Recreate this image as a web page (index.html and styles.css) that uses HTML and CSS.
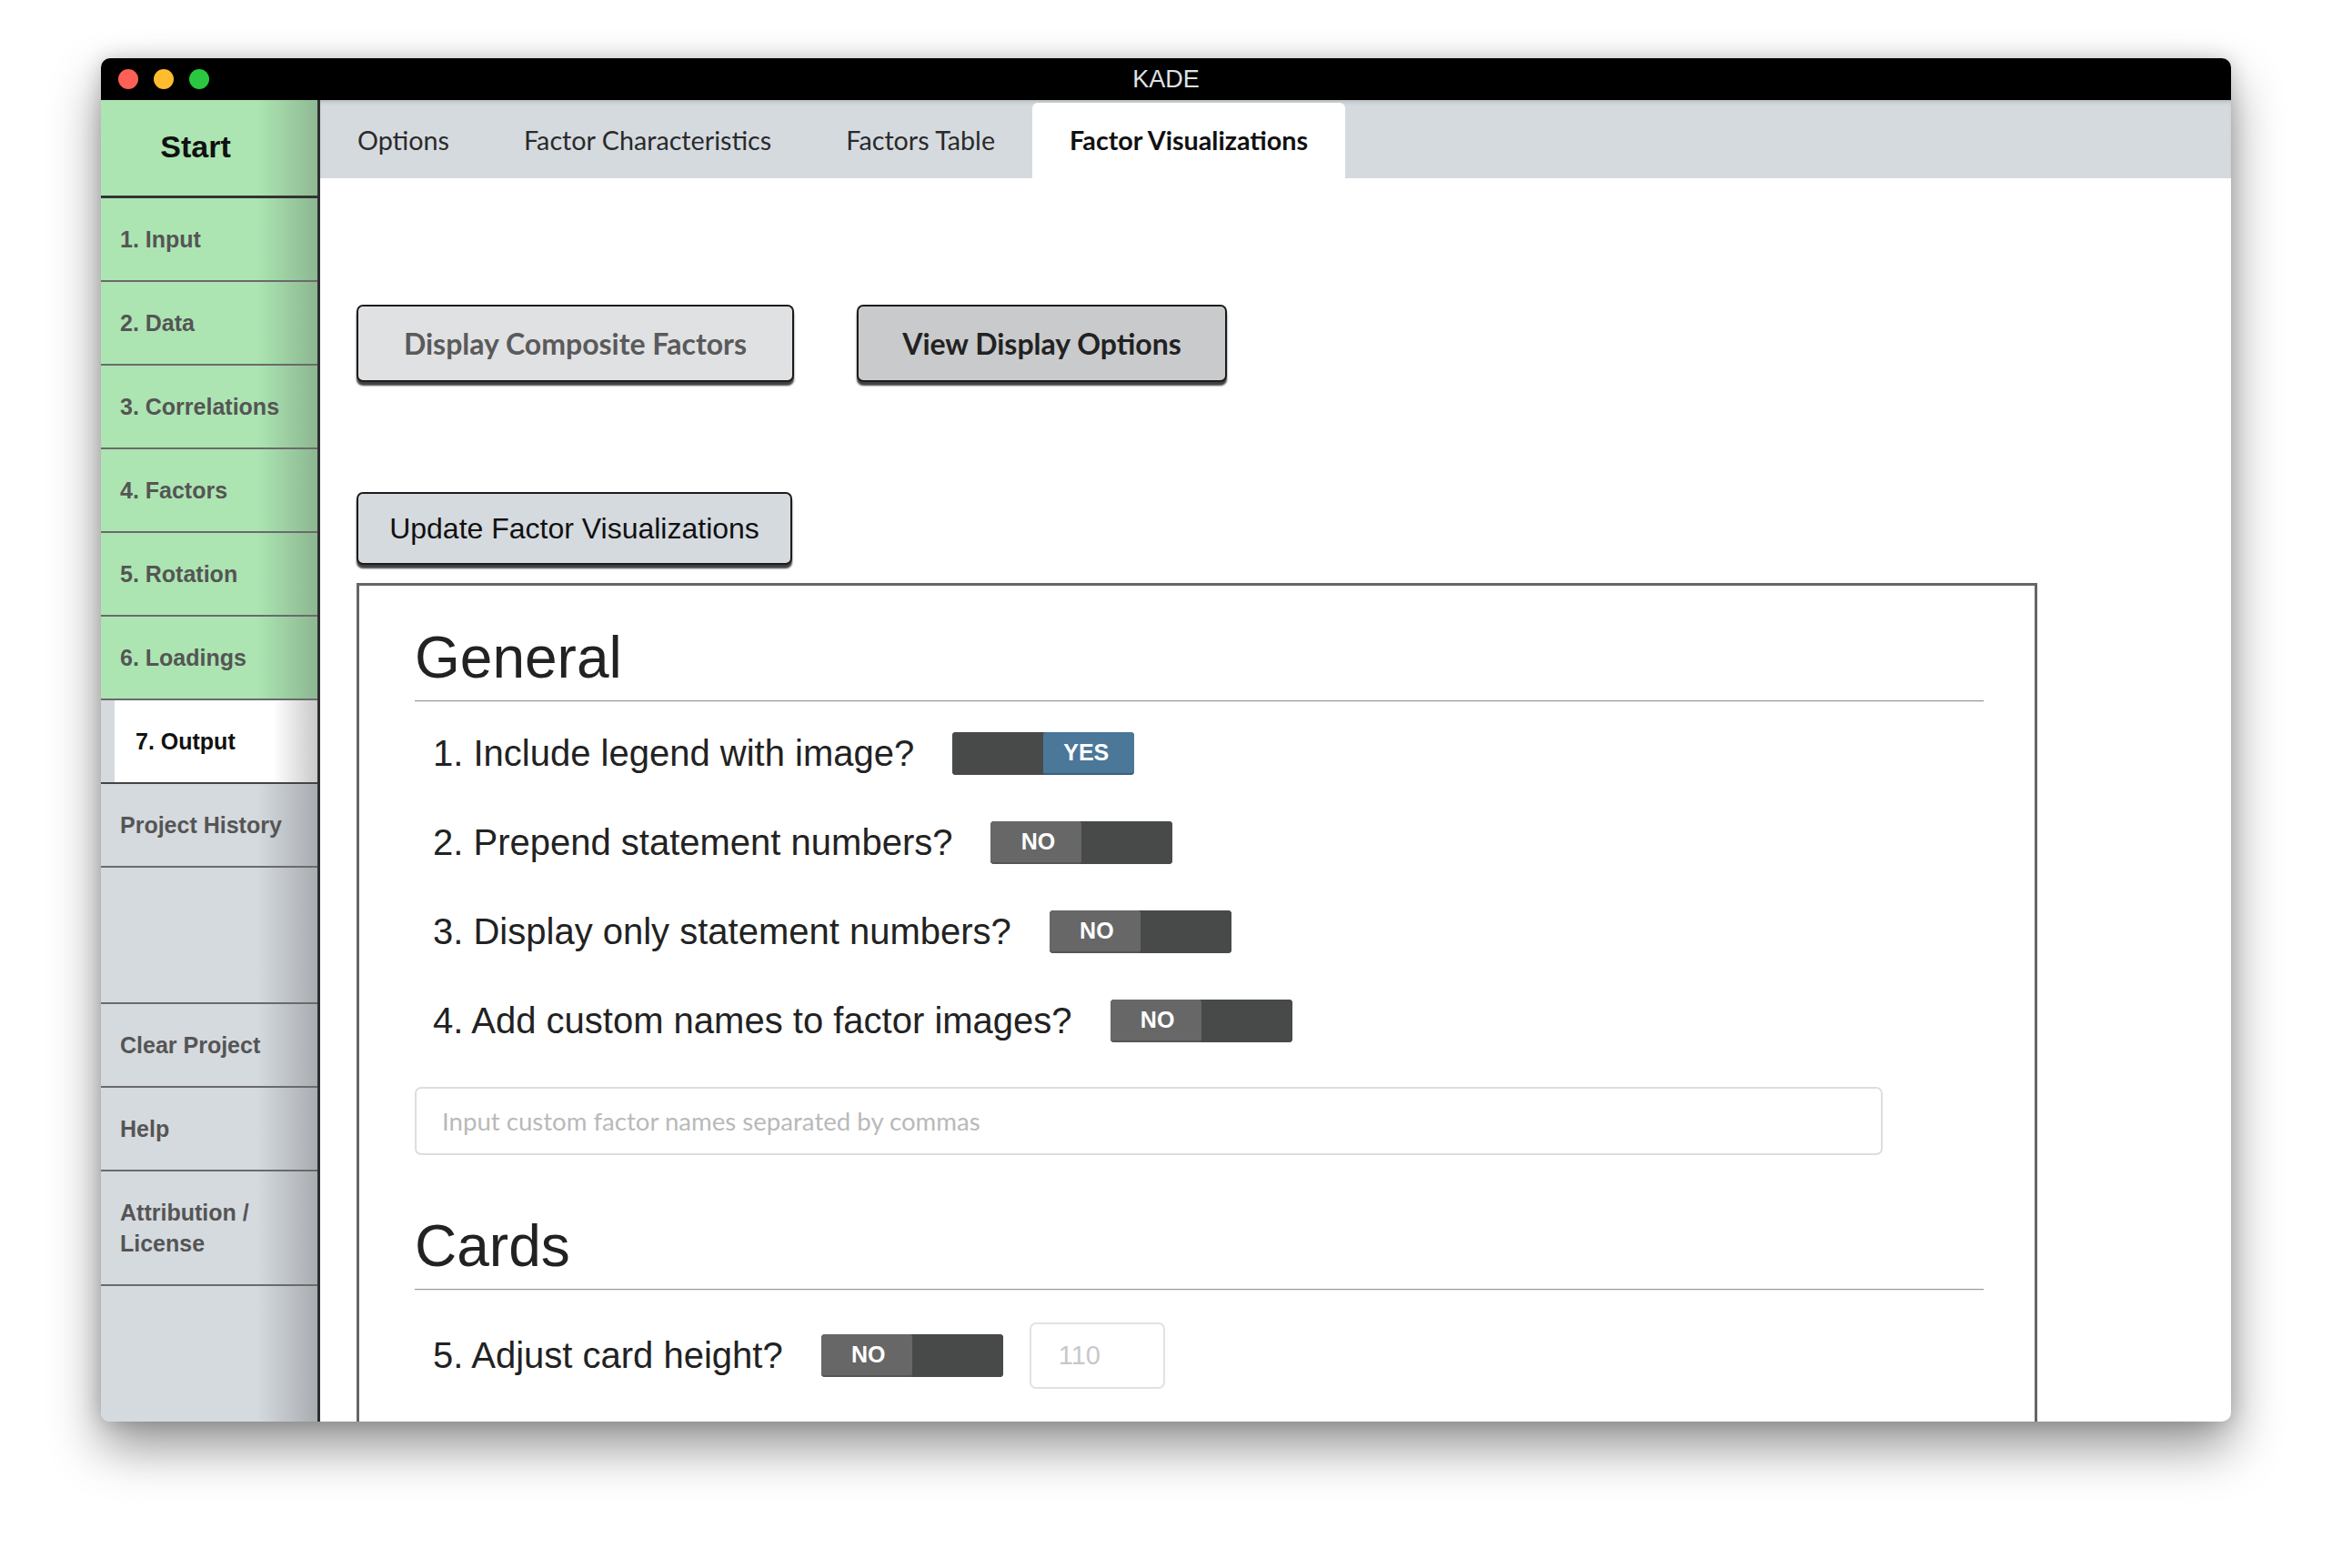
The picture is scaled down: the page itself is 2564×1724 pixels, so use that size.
FILE: index.html
```html
<!DOCTYPE html>
<html lang="en">
<head>
<meta charset="utf-8">
<title>KADE</title>
<link rel="stylesheet" href="styles.css">
</head>
<body>
<div class="stage">
  <div class="window">
    <div class="titlebar">
      <div class="lights">
        <span class="light red"></span>
        <span class="light yellow"></span>
        <span class="light green"></span>
      </div>
      <span class="title">KADE</span>
    </div>
    <div class="app">
      <nav class="sidebar">
        <div class="start">Start</div>
        <div class="nav-item step">1. Input</div>
        <div class="nav-item step">2. Data</div>
        <div class="nav-item step">3. Correlations</div>
        <div class="nav-item step">4. Factors</div>
        <div class="nav-item step">5. Rotation</div>
        <div class="nav-item step">6. Loadings</div>
        <div class="nav-item active"><span class="active-label">7. Output</span></div>
        <div class="nav-item util">Project History</div>
        <div class="nav-spacer"></div>
        <div class="nav-item util">Clear Project</div>
        <div class="nav-item util">Help</div>
        <div class="nav-item util tall">Attribution /<br>License</div>
        <div class="nav-fill"></div>
      </nav>
      <main class="main">
        <div class="tabbar">
          <div class="tab">Options</div>
          <div class="tab">Factor Characteristics</div>
          <div class="tab">Factors Table</div>
          <div class="tab tab-active">Factor Visualizations</div>
        </div>
        <div class="content">
          <div class="btn-row">
            <button class="btn btn-composite">Display Composite Factors</button>
            <button class="btn btn-view">View Display Options</button>
          </div>
          <button class="btn btn-update">Update Factor Visualizations</button>
          <section class="panel">
            <h2 class="section-title">General</h2>
            <hr class="rule">
            <div class="q-row first">
              <span class="q-text">1. Include legend with image?</span>
              <span class="toggle on"><span class="half off-half"></span><span class="half yes">YES</span></span>
            </div>
            <div class="q-row">
              <span class="q-text">2. Prepend statement numbers?</span>
              <span class="toggle"><span class="half no">NO</span><span class="half off-half"></span></span>
            </div>
            <div class="q-row">
              <span class="q-text">3. Display only statement numbers?</span>
              <span class="toggle"><span class="half no">NO</span><span class="half off-half"></span></span>
            </div>
            <div class="q-row">
              <span class="q-text">4. Add custom names to factor images?</span>
              <span class="toggle"><span class="half no">NO</span><span class="half off-half"></span></span>
            </div>
            <input class="names-input" type="text" placeholder="Input custom factor names separated by commas">
            <h2 class="section-title cards">Cards</h2>
            <hr class="rule">
            <div class="q-row card-row">
              <span class="q-text">5. Adjust card height?</span>
              <span class="toggle"><span class="half no">NO</span><span class="half off-half"></span></span>
              <input class="num-input" type="text" placeholder="110">
            </div>
          </section>
        </div>
      </main>
    </div>
  </div>
</div>
</body>
</html>
```

FILE: styles.css
```css
* { box-sizing: border-box; }
html, body { margin: 0; padding: 0; background: #ffffff; }
body { width: 2564px; height: 1724px; overflow: hidden; font-family: "Liberation Sans", Arial, sans-serif; }

.stage { padding: 64px 0 0 111px; }

.window {
  width: 2342px;
  height: 1499px;
  border-radius: 10px;
  overflow: hidden;
  display: flex;
  flex-direction: column;
  background: #fff;
  box-shadow: 0 28px 55px rgba(0,0,0,0.42), 0 0 22px rgba(0,0,0,0.18);
}

.titlebar {
  height: 46px;
  flex: none;
  background: #000;
  position: relative;
  display: flex;
  align-items: center;
  justify-content: center;
}
.lights { position: absolute; left: 19px; top: 12px; display: flex; gap: 17px; }
.light { width: 22px; height: 22px; border-radius: 50%; display: block; }
.red { background: #fe5f57; }
.yellow { background: #febc2e; }
.green { background: #2ac840; }
.title { color: #dfe2e5; font-size: 27px; font-family: "Liberation Sans", Arial, sans-serif; }

.app { flex: 1; display: flex; min-height: 0; }

/* Sidebar */
.sidebar {
  width: 241px;
  flex: none;
  display: flex;
  flex-direction: column;
  border-right: 3px solid #2e2e30;
  background: #d5dadf;
  font-family: "Liberation Sans", Arial, sans-serif;
  font-weight: bold;
}
.start {
  height: 108px;
  flex: none;
  display: flex;
  align-items: center;
  justify-content: center;
  padding-right: 30px;
  padding-bottom: 2px;
  font-size: 34px;
  color: #111;
  background: linear-gradient(to right, #ace5b2 0%, #ace5b2 72%, #8fb994 100%);
  border-bottom: 3px solid #333;
}
.nav-item {
  height: 92px;
  flex: none;
  display: flex;
  align-items: center;
  padding-left: 21px;
  font-size: 25px;
  color: #555;
  border-bottom: 2px solid #6a6a6c;
}
.step { background: linear-gradient(to right, #ace5b2 0%, #ace5b2 72%, #8cb791 100%); }
.util { background: linear-gradient(to right, #d5dadf 0%, #d5dadf 72%, #a9adb1 100%); }
.tall { height: 126px; line-height: 34px; }
.active {
  padding-left: 15px;
  background: #d5dadf;
  border-bottom: 2px solid #444;
}
.active-label {
  flex: 1;
  align-self: stretch;
  display: flex;
  align-items: center;
  padding-left: 23px;
  color: #111;
  background: linear-gradient(to right, #fff 0%, #fff 78%, #c9c9c9 100%);
}
.nav-spacer {
  height: 150px;
  flex: none;
  border-bottom: 2px solid #6a6a6c;
  background: linear-gradient(to right, #d5dadf 0%, #d5dadf 72%, #a9adb1 100%);
}
.nav-fill { flex: 1; background: linear-gradient(to right, #d5dadf 0%, #d5dadf 72%, #a9adb1 100%); }

/* Main */
.main { flex: 1; display: flex; flex-direction: column; min-width: 0; }
.tabbar {
  height: 86px;
  flex: none;
  display: flex;
  align-items: flex-end;
  background: #d5dadf;
  box-shadow: inset 0 4px 4px -2px rgba(0,0,0,0.15);
}
.tab {
  height: 83px;
  display: flex;
  align-items: center;
  padding: 0 41px 2px;
  font-family: Lato, "Open Sans", sans-serif;
  font-size: 28.7px;
  color: #2a2a2a;
}
.tab-active {
  background: #fff;
  border-radius: 6px 6px 0 0;
  font-weight: bold;
  color: #111;
}

.content { flex: 1; padding: 139px 0 0 40px; min-height: 0; }
.btn-row { display: flex; gap: 69px; }
.btn {
  display: block;
  border: 2px solid #1c1c1c;
  border-radius: 7px;
  box-shadow: 0 4px 2px rgba(0,0,0,0.75);
  cursor: pointer;
  padding: 0;
}
.btn-composite {
  width: 481px; height: 85px;
  background: #e0e1e3;
  color: #5a5a5a;
  font-family: Lato, sans-serif; font-weight: bold; font-size: 32px;
}
.btn-view {
  width: 407px; height: 85px;
  background: #c9cacc;
  color: #222;
  font-family: Lato, sans-serif; font-weight: bold; font-size: 32px;
}
.btn-update {
  margin-top: 121px;
  width: 479px; height: 80px;
  background: #d5dadf;
  color: #111;
  font-family: "Liberation Sans", Arial, sans-serif; font-size: 32px;
}

.panel {
  margin-top: 20px;
  width: 1848px;
  height: 1000px;
  border: 3px solid #666;
  padding: 42px 56px 0 61px;
  color: #222;
}
.section-title {
  margin: 0;
  font-weight: normal;
  font-size: 64px;
  line-height: 74px;
  color: #222;
  font-family: "Liberation Sans", Arial, sans-serif;
}
.section-title.cards { margin-top: 63px; }
.rule {
  margin: 10px 0 0 0;
  border: none;
  height: 2px;
  background: #9a9a9a;
  border-bottom: 1px solid #e6e6e6;
}
.q-row {
  height: 98px;
  display: flex;
  align-items: center;
  padding-left: 20px;
  gap: 42px;
}
.q-row.first { margin-top: 7px; }
.q-text { font-size: 40px; color: #222; }
.toggle {
  width: 200px;
  height: 47px;
  display: flex;
  border-radius: 4px;
  overflow: hidden;
  background: #484a49;
  flex: none;
}
.half {
  width: 100px;
  height: 100%;
  display: flex;
  align-items: center;
  justify-content: center;
  color: #fff;
  font-weight: bold;
  font-size: 25px;
}
.off-half { background: #484a49; }
.yes { background: #4b7799; border-bottom: 2px solid #39607f; border-radius: 3px; padding-right: 6px; }
.no { background: #676767; border-bottom: 2px solid #555; border-radius: 3px; padding-left: 4px; }

.names-input {
  display: block;
  margin-top: 24px;
  width: 1614px;
  height: 75px;
  border: 2px solid #dedede;
  border-radius: 7px;
  padding: 0 0 0 28px;
  font-family: Lato, sans-serif;
  font-size: 27.6px;
  color: #333;
  outline: none;
}
.names-input::placeholder { color: #b9b9b9; }

.card-row { margin-top: 22px; gap: 0; }
.card-row .toggle { margin-left: 42px; }
.num-input {
  margin-left: 29px;
  width: 149px;
  height: 73px;
  border: 2px solid #e2e2e2;
  border-radius: 7px;
  padding: 0 0 0 30px;
  font-family: "Liberation Sans", Arial, sans-serif;
  font-size: 29px;
  outline: none;
}
.num-input::placeholder { color: #c8c8c8; }
```
